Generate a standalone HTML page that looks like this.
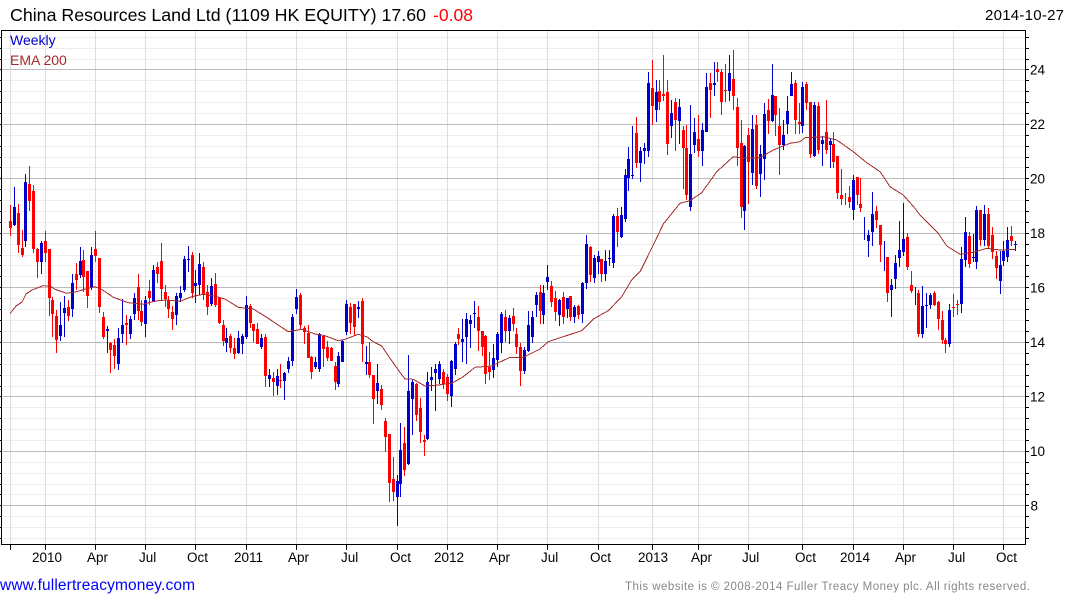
<!DOCTYPE html>
<html lang="en">
<head>
<meta charset="utf-8">
<title>China Resources Land Ltd</title>
<style>
html,body{margin:0;padding:0;background:#fff;width:1075px;height:600px;overflow:hidden}
svg{display:block;font-family:"Liberation Sans",Arial,sans-serif}
path{fill:none}
.g{shape-rendering:crispEdges}
</style>
</head>
<body>
<svg width="1075" height="600" viewBox="0 0 1075 600" xmlns="http://www.w3.org/2000/svg">
<g class="g">
<path stroke="#eeeeee" d="M1 37.5H1025M1 48.5H1025M1 59.5H1025M1 80.5H1025M1 91.5H1025M1 102.5H1025M1 113.5H1025M1 135.5H1025M1 146.5H1025M1 157.5H1025M1 167.5H1025M1 189.5H1025M1 200.5H1025M1 211.5H1025M1 222.5H1025M1 244.5H1025M1 255.5H1025M1 265.5H1025M1 276.5H1025M1 298.5H1025M1 309.5H1025M1 320.5H1025M1 331.5H1025M1 353.5H1025M1 364.5H1025M1 375.5H1025M1 386.5H1025M1 407.5H1025M1 418.5H1025M1 429.5H1025M1 440.5H1025M1 462.5H1025M1 473.5H1025M1 484.5H1025M1 494.5H1025M1 516.5H1025M1 527.5H1025M1 538.5H1025"/>
<path stroke="#dddddd" d="M10.5 31V544M45.5 31V544M95.5 31V544M145.5 31V544M195.5 31V544M246.5 31V544M296.5 31V544M346.5 31V544M397.5 31V544M447.5 31V544M497.5 31V544M547.5 31V544M598.5 31V544M652.5 31V544M698.5 31V544M748.5 31V544M802.5 31V544M853.5 31V544M903.5 31V544M953.5 31V544M1003.5 31V544"/>
<path stroke="#bbbbbb" d="M1 69.5H1025M1 124.5H1025M1 178.5H1025M1 233.5H1025M1 287.5H1025M1 342.5H1025M1 396.5H1025M1 451.5H1025M1 505.5H1025"/>

<!-- red wicks -->
<path stroke="#ff0000" d="M10.5 205V236M18.5 204V253M22.5 230V257M29.5 166V211M33.5 185V253M37.5 248V278M45.5 231V262M49.5 249V316M52.5 297V337M56.5 310V353M68.5 300V321M76.5 263V290M83.5 250V292M87.5 271V308M95.5 231V262M99.5 258V313M103.5 312V339M110.5 342V373M114.5 339V369M126.5 315V345M138.5 274V320M141.5 300V326M149.5 280V305M157.5 262V283M161.5 243V300M165.5 285V307M168.5 296V318M172.5 306V330M192.5 252V298M203.5 262V300M207.5 285V315M215.5 273V307M219.5 297V324M223.5 320V346M230.5 334V353M234.5 338V359M250.5 304V328M253.5 324V342M257.5 323V344M265.5 334V387M273.5 372V396M280.5 364V388M300.5 293V330M304.5 326V344M308.5 325V358M311.5 356V379M323.5 335V367M327.5 341V361M331.5 347V361M335.5 362V390M350.5 303V334M354.5 304V336M362.5 298V362M369.5 342V378M373.5 375V424M381.5 385V410M385.5 418V452M389.5 434V502M393.5 457V501M404.5 427V476M416.5 383V421M420.5 398V443M424.5 435V456M443.5 369V389M447.5 374V401M458.5 328V345M478.5 306V351M482.5 331V356M485.5 335V384M489.5 352V380M505.5 310V342M513.5 308V331M516.5 328V354M520.5 343V386M540.5 285V324M551.5 281V307M555.5 291V321M563.5 292V324M570.5 296V321M578.5 305V319M590.5 246V282M601.5 259V282M617.5 208V247M636.5 117V168M652.5 60V125M659.5 80V110M663.5 55V101M667.5 80V155M675.5 98V151M683.5 126V189M686.5 125V200M698.5 115V157M710.5 73V118M717.5 62V82M721.5 69V115M725.5 64V102M733.5 50V110M737.5 98V166M741.5 120V218M748.5 128V204M756.5 115V189M768.5 99V134M775.5 96V136M779.5 108V175M795.5 80V134M799.5 103V134M806.5 82V110M810.5 102V158M818.5 102V154M826.5 100V154M833.5 132V168M837.5 156V199M841.5 169V205M845.5 193V205M849.5 186V208M857.5 177V205M860.5 178V212M876.5 206V228M880.5 225V262M887.5 257V302M907.5 233V270M911.5 271V293M918.5 290V337M934.5 291V306M938.5 301V330M942.5 311V344M945.5 338V353M953.5 294V317M957.5 300V315M969.5 232V268M980.5 210V246M988.5 208V249M992.5 227V259M996.5 251V279M1011.5 226V246"/>
<!-- red bodies -->
<path stroke="#ff0000" stroke-width="3" d="M10.5 221V228M18.5 213V245M22.5 248V255M29.5 184V201M33.5 191V249M37.5 249V262M45.5 241V253M49.5 249V298M52.5 300V314M56.5 316V340M68.5 307V316M76.5 274V280M83.5 260V277M87.5 271V296M95.5 249V256M99.5 258V307M103.5 317V337M110.5 343V350M114.5 345V356M126.5 323V325M138.5 287V311M141.5 311V322M149.5 291V298M157.5 267V274M161.5 261V289M165.5 292V299M168.5 300V309M172.5 312V319M192.5 255V293M203.5 267V295M207.5 292V307M215.5 284V305M219.5 298V323M223.5 325V341M230.5 336V348M234.5 348V354M250.5 306V323M253.5 324V331M257.5 329V344M265.5 337V376M273.5 378V382M280.5 380V381M300.5 295V325M304.5 328V332M308.5 333V358M311.5 357V372M323.5 336V349M327.5 347V358M331.5 348V361M335.5 366V382M350.5 307V323M354.5 304V327M362.5 301V344M369.5 362V375M373.5 375V399M381.5 389V405M385.5 421V437M389.5 434V483M393.5 479V492M404.5 443V470M416.5 384V415M420.5 408V432M424.5 440V442M443.5 372V384M447.5 377V394M458.5 334V339M478.5 317V331M482.5 331V347M485.5 336V374M489.5 367V372M505.5 317V331M513.5 316V324M516.5 334V347M520.5 347V371M540.5 292V311M551.5 286V302M555.5 298V312M563.5 297V317M570.5 296V317M578.5 306V315M590.5 247V275M601.5 259V274M617.5 216V232M636.5 133V163M652.5 88V106M659.5 91V102M663.5 94V96M667.5 92V144M675.5 102V120M683.5 130V148M686.5 148V195M698.5 139V151M710.5 83V90M717.5 69V72M721.5 72V102M725.5 90V91M733.5 79V96M737.5 107V148M741.5 143V207M748.5 135V162M756.5 125V186M768.5 110V121M775.5 96V115M779.5 126V145M795.5 83V120M799.5 122V124M806.5 84V103M810.5 102V154M818.5 106V150M826.5 132V150M833.5 144V162M837.5 156V193M841.5 195V199M849.5 197V202M857.5 177V195M860.5 204V208M876.5 211V220M880.5 225V245M887.5 257V293M907.5 237V267M911.5 285V291M918.5 293V334M934.5 293V305M938.5 302V319M942.5 320V340M945.5 340V344M953.5 307V308M957.5 304V305M969.5 236V264M980.5 210V240M988.5 214V246M992.5 235V252M996.5 256V268M1011.5 236V241"/>
<!-- blue wicks -->
<path stroke="#0000cc" d="M14.5 187V226M25.5 174V247M41.5 241V274M60.5 302V341M64.5 296V337M72.5 274V317M80.5 247V278M91.5 247V290M107.5 326V353M118.5 328V370M122.5 299V343M130.5 316V339M134.5 293V320M145.5 296V337M153.5 265V302M176.5 293V325M180.5 286V302M184.5 256V292M188.5 246V272M195.5 270V303M199.5 253V295M211.5 278V306M226.5 328V352M238.5 331V354M242.5 334V354M246.5 296V339M261.5 334V349M269.5 369V387M277.5 369V395M284.5 372V400M288.5 357V373M292.5 314V366M296.5 289V314M315.5 357V369M319.5 333V372M338.5 352V387M342.5 340V362M346.5 300V335M358.5 301V318M366.5 346V375M377.5 364V404M397.5 475V526M400.5 423V497M408.5 355V465M412.5 380V435M427.5 372V440M431.5 367V391M435.5 364V411M439.5 361V384M451.5 360V407M455.5 342V375M462.5 319V362M466.5 313V364M470.5 315V348M474.5 301V328M493.5 344V378M497.5 332V367M501.5 312V353M509.5 315V344M524.5 347V374M528.5 311V352M532.5 311V343M536.5 292V317M543.5 285V324M547.5 265V290M559.5 299V326M567.5 298V318M574.5 305V323M582.5 282V323M586.5 235V289M594.5 255V283M598.5 251V274M605.5 250V281M609.5 250V266M613.5 214V268M621.5 207V238M625.5 169V222M628.5 147V191M632.5 126V179M640.5 147V182M644.5 143V164M648.5 72V157M656.5 80V122M671.5 100V138M679.5 99V144M690.5 105V211M694.5 118V153M702.5 123V166M706.5 73V132M714.5 62V96M729.5 55V101M744.5 145V230M752.5 115V185M760.5 145V197M764.5 103V180M772.5 64V122M783.5 120V150M787.5 96V134M791.5 72V96M802.5 82V133M814.5 102V157M822.5 136V166M830.5 138V168M853.5 175V220M864.5 217V240M868.5 230V257M872.5 192V246M884.5 241V271M891.5 279V317M895.5 255V289M899.5 221V267M903.5 203V256M915.5 287V305M922.5 286V338M926.5 293V328M930.5 293V309M949.5 304V347M961.5 247V313M965.5 217V267M973.5 234V262M976.5 206V269M984.5 205V246M1000.5 251V294M1003.5 241V266M1007.5 227V262M1015.5 241V251"/>
<!-- blue bodies -->
<path stroke="#0000cc" stroke-width="3" d="M14.5 207V225M25.5 182V241M41.5 243V262M60.5 325V336M64.5 308V313M72.5 283V309M80.5 261V275M91.5 255V288M107.5 329V331M118.5 338V364M122.5 325V334M130.5 319V334M134.5 298V314M145.5 300V324M153.5 270V302M176.5 296V315M180.5 293V298M184.5 259V290M188.5 259V260M195.5 283V286M199.5 264V285M211.5 286V304M226.5 338V343M238.5 338V353M242.5 336V344M246.5 305V337M261.5 338V347M269.5 375V379M277.5 376V386M284.5 373V381M288.5 361V369M292.5 317V361M296.5 297V309M315.5 362V367M319.5 334V369M338.5 356V384M342.5 341V362M346.5 304V332M358.5 307V309M366.5 362V364M377.5 383V391M397.5 481V497M400.5 450V484M408.5 391V464M412.5 382V399M427.5 382V439M431.5 377V380M435.5 369V373M439.5 364V379M451.5 361V396M455.5 344V369M462.5 339V342M466.5 319V337M470.5 320V324M474.5 313V314M493.5 358V370M497.5 334V360M501.5 314V343M509.5 318V331M524.5 350V371M528.5 325V351M532.5 317V337M536.5 295V305M543.5 293V315M547.5 277V282M559.5 300V315M567.5 298V309M574.5 307V317M582.5 283V314M586.5 244V283M594.5 258V278M598.5 256V262M605.5 261V274M609.5 258V259M613.5 216V263M621.5 215V237M625.5 175V219M628.5 159V178M632.5 175V176M640.5 151V163M644.5 148V151M648.5 83V151M656.5 92V110M671.5 113V126M679.5 107V121M690.5 154V207M694.5 132V145M702.5 130V151M706.5 87V132M714.5 83V85M729.5 73V91M744.5 146V211M752.5 129V173M760.5 154V174M764.5 114V159M772.5 95V121M783.5 135V145M787.5 111V124M791.5 84V96M802.5 87V126M814.5 105V156M822.5 140V144M830.5 141V145M853.5 180V210M868.5 235V241M872.5 214V232M891.5 285V290M895.5 263V279M899.5 250V258M903.5 239V252M922.5 306V334M926.5 305V306M930.5 295V305M949.5 310V344M961.5 259V304M965.5 232V260M973.5 257V258M976.5 210V262M984.5 214V240M1000.5 265V281M1003.5 251V261M1007.5 240V257M1015.5 244V245"/>
</g>

<polyline class="g" fill="none" stroke="#a52a2a" stroke-width="1" points="10.3,313.3 16,306 22,302 26,294 32,290 43,285.7 50,286 55,289.3 66.7,293.3 76.7,291.7 87.3,288.3 95,286.7 101.7,289.3 113.3,297.3 128.3,302.7 143.3,304.3 155,301 166.7,300 180,301.3 191.7,296.7 203.3,294.3 216.7,296.7 225,299 238.3,307.3 253.3,309 266.7,317.3 276.7,324 288.3,331.7 301.7,329.3 315,334 325,335.7 338.3,340.7 345,339.3 358.3,334.3 366.7,336.7 373.3,341.7 381.7,346 390,358.3 398.3,370 405,379 413.3,379.3 425,386 438.3,385 451.7,383.3 463.3,376.7 475,367.3 491.7,366 510,357.3 523.3,357.3 540,349 548.3,341.7 563.3,336.7 581.7,330.7 593.3,319 608.3,310.7 621.7,296.7 631.7,280 640,271.7 646.7,258.3 655.7,240 663.3,224 680,203.3 690,200.7 701.7,192.7 716.7,171.7 733.3,156.7 743.3,158.3 760,157.7 773.3,150 790,143.3 800,141.7 805,137.7 823.3,136.7 836.7,140 853.3,151.7 866.7,162.7 880,171.7 890,186.7 903.3,195 915,208.3 920,215 938.3,233.3 946.7,246 960,254.3 973.3,252.3 986.7,248.3 1000,250 1015.3,249.3"/>

<g class="g">
<path stroke="#000" d="M1.5 30.5H1025.5V544.5H1.5Z"/>
<path stroke="#000" d="M0 37.5H1M0 48.5H1M0 59.5H1M0 69.5H1M0 80.5H1M0 91.5H1M0 102.5H1M0 113.5H1M0 124.5H1M0 135.5H1M0 146.5H1M0 157.5H1M0 167.5H1M0 178.5H1M0 189.5H1M0 200.5H1M0 211.5H1M0 222.5H1M0 233.5H1M0 244.5H1M0 255.5H1M0 265.5H1M0 276.5H1M0 287.5H1M0 298.5H1M0 309.5H1M0 320.5H1M0 331.5H1M0 342.5H1M0 353.5H1M0 364.5H1M0 375.5H1M0 386.5H1M0 396.5H1M0 407.5H1M0 418.5H1M0 429.5H1M0 440.5H1M0 451.5H1M0 462.5H1M0 473.5H1M0 484.5H1M0 494.5H1M0 505.5H1M0 516.5H1M0 527.5H1M0 538.5H1"/>
<path stroke="#000" d="M1026 37.5H1029M1026 48.5H1029M1026 59.5H1029M1026 69.5H1029M1026 80.5H1029M1026 91.5H1029M1026 102.5H1029M1026 113.5H1029M1026 124.5H1029M1026 135.5H1029M1026 146.5H1029M1026 157.5H1029M1026 167.5H1029M1026 178.5H1029M1026 189.5H1029M1026 200.5H1029M1026 211.5H1029M1026 222.5H1029M1026 233.5H1029M1026 244.5H1029M1026 255.5H1029M1026 265.5H1029M1026 276.5H1029M1026 287.5H1029M1026 298.5H1029M1026 309.5H1029M1026 320.5H1029M1026 331.5H1029M1026 342.5H1029M1026 353.5H1029M1026 364.5H1029M1026 375.5H1029M1026 386.5H1029M1026 396.5H1029M1026 407.5H1029M1026 418.5H1029M1026 429.5H1029M1026 440.5H1029M1026 451.5H1029M1026 462.5H1029M1026 473.5H1029M1026 484.5H1029M1026 494.5H1029M1026 505.5H1029M1026 516.5H1029M1026 527.5H1029M1026 538.5H1029"/>
<path stroke="#000" d="M10.5 545V550M45.5 545V550M95.5 545V550M145.5 545V550M195.5 545V550M246.5 545V550M296.5 545V550M346.5 545V550M397.5 545V550M447.5 545V550M497.5 545V550M547.5 545V550M598.5 545V550M652.5 545V550M698.5 545V550M748.5 545V550M802.5 545V550M853.5 545V550M903.5 545V550M953.5 545V550M1003.5 545V550"/>
</g>

<text x="10" y="21" font-size="17.8" fill="#000" textLength="416" lengthAdjust="spacing">China Resources Land Ltd (1109 HK EQUITY) 17.60</text>
<text x="433" y="21" font-size="17.5" fill="#ff0000" textLength="40" lengthAdjust="spacing">-0.08</text>
<text x="985" y="20" font-size="15" fill="#000" textLength="79" lengthAdjust="spacing">2014-10-27</text>
<text x="10" y="45" font-size="14" fill="#0000cc">Weekly</text>
<text x="10" y="65" font-size="14" fill="#a52a2a">EMA 200</text>

<g font-size="13.5" fill="#000">
<text x="1030" y="74.5">24</text>
<text x="1030" y="129">22</text>
<text x="1030" y="183.5">20</text>
<text x="1030" y="238">18</text>
<text x="1030" y="292.5">16</text>
<text x="1030" y="347">14</text>
<text x="1030" y="401.5">12</text>
<text x="1030" y="456">10</text>
<text x="1030.5" y="510.5">8</text>
<text x="32" y="562">2010</text>
<text x="87" y="562">Apr</text>
<text x="139" y="562">Jul</text>
<text x="187" y="562">Oct</text>
<text x="234" y="562">2011</text>
<text x="288" y="562">Apr</text>
<text x="341" y="562">Jul</text>
<text x="390" y="562">Oct</text>
<text x="434" y="562">2012</text>
<text x="489" y="562">Apr</text>
<text x="541" y="562">Jul</text>
<text x="590" y="562">Oct</text>
<text x="638" y="562">2013</text>
<text x="691" y="562">Apr</text>
<text x="742" y="562">Jul</text>
<text x="795" y="562">Oct</text>
<text x="840" y="562">2014</text>
<text x="895" y="562">Apr</text>
<text x="948" y="562">Jul</text>
<text x="996" y="562">Oct</text>
</g>

<text x="0" y="590" font-size="15.5" fill="#0000ff" textLength="195" lengthAdjust="spacing">www.fullertreacymoney.com</text>
<text x="625" y="590" font-size="11.5" fill="#888888" textLength="405" lengthAdjust="spacing">This website is © 2008-2014 Fuller Treacy Money plc. All rights reserved.</text>
</svg>
</body>
</html>
